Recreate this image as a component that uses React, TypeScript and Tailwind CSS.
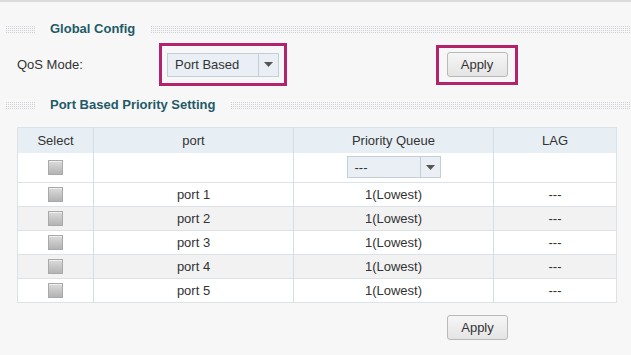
import React from "react";

const font = { fontFamily: '"Liberation Sans", Arial, sans-serif' };

function Dots({ className = "" }: { className?: string }) {
  return (
    <div
      className={`h-[7px] bg-[conic-gradient(#cdd1d5_25%,transparent_0)] bg-[length:2px_2px] ${className}`}
    />
  );
}

function SectionTitle({ title }: { title: string }) {
  return (
    <div className="flex items-center h-4">
      <Dots className="w-[30px] ml-[5px]" />
      <span className="ml-[15px] text-[13px] font-bold text-[#1f5a69] whitespace-nowrap">{title}</span>
      <Dots className="flex-1 ml-[15px]" />
    </div>
  );
}

function Arrow() {
  return (
    <svg width="9" height="5" viewBox="0 0 9 5">
      <path d="M0 0h9L4.5 5z" fill="#555" />
    </svg>
  );
}

function Select({ value, w, h, arrowW }: { value: string; w: string; h: string; arrowW: string }) {
  return (
    <div className={`flex ${w} ${h} bg-[#e9eff4] border border-[#c3ced6] text-[#333]`}>
      <div className="flex-1 flex items-center pl-[7px]">{value}</div>
      <div className={`${arrowW} border-l border-[#c3ced6] flex items-center justify-center`}>
        <Arrow />
      </div>
    </div>
  );
}

function ApplyButton() {
  return (
    <button className="w-[61px] h-[25px] rounded-[3px] border border-[#b9b9b9] bg-gradient-to-b from-[#f6f6f6] to-[#e4e4e4] text-[13px] text-[#333]">
      Apply
    </button>
  );
}

function Check() {
  return (
    <div className="mx-auto w-[15px] h-[15px] border border-[#a9a9a9] bg-gradient-to-b from-[#dcdcdc] to-[#b3b3b3] shadow-[inset_0_1px_0_#eee]" />
  );
}

const ports = ["port 1", "port 2", "port 3", "port 4", "port 5"];

export default function App() {
  return (
    <div style={font} className="w-[631px] h-[355px] bg-[#f7f7f7] border-t-2 border-[#dcdcdc] pt-[19px] text-[13px] text-[#333] overflow-hidden">
      <SectionTitle title="Global Config" />

      <div className="flex items-center pl-[17px] mt-[6px]">
        <div className="w-[142px]">QoS Mode:</div>
        <div className="w-[128px] h-[43px] border-[3px] border-[#b3236b] flex items-center justify-center">
          <Select value="Port Based" w="w-[112px]" h="h-[24px]" arrowW="w-[20px]" />
        </div>
        <div className="ml-[149px] w-[82px] h-[40px] border-[3px] border-[#b3236b] flex items-center justify-center">
          <ApplyButton />
        </div>
      </div>

      <div className="mt-[11px]">
        <SectionTitle title="Port Based Priority Setting" />
      </div>

      <div className="ml-[17px] mt-[14px] w-[600px]">
        <table className="w-full table-fixed border-collapse border border-[#dbe2e8] bg-white text-center">
          <colgroup>
            <col className="w-[76px]" />
            <col className="w-[200px]" />
            <col className="w-[200px]" />
            <col />
          </colgroup>
          <thead>
            <tr className="h-[25px] bg-[#e8eff4]">
              <th className="font-normal border-r border-[#d5dee6]">Select</th>
              <th className="font-normal border-r border-[#d5dee6]">port</th>
              <th className="font-normal border-r border-[#d5dee6]">Priority Queue</th>
              <th className="font-normal">LAG</th>
            </tr>
          </thead>
          <tbody>
            <tr className="h-[30px] border-b border-[#dde2e6]">
              <td className="border-r border-[#d5dee6]">
                <Check />
              </td>
              <td className="border-r border-[#d5dee6]" />
              <td className="border-r border-[#d5dee6]">
                <div className="flex justify-center">
                  <Select value="---" w="w-[94px]" h="h-[22px]" arrowW="w-[20px]" />
                </div>
              </td>
              <td />
            </tr>
            {ports.map((p, i) => (
              <tr key={p} className={`h-[24px] border-b border-[#dde2e6] ${i % 2 === 1 ? "bg-[#f2f2f2]" : "bg-white"}`}>
                <td className="border-r border-[#d5dee6]">
                  <Check />
                </td>
                <td className="border-r border-[#d5dee6]">{p}</td>
                <td className="border-r border-[#d5dee6]">1(Lowest)</td>
                <td>---</td>
              </tr>
            ))}
          </tbody>
        </table>
      </div>

      <div className="ml-[447px] mt-[12px]">
        <ApplyButton />
      </div>
    </div>
  );
}
